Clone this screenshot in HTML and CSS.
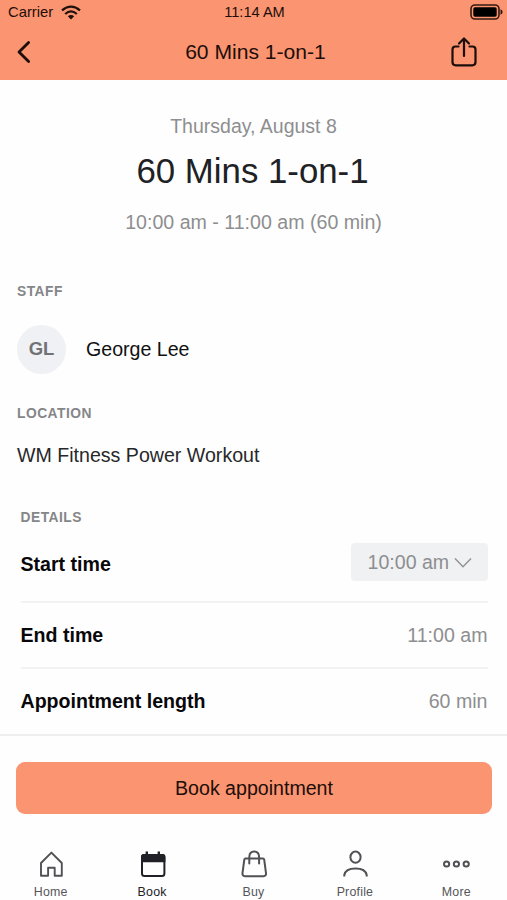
FILE: index.html
```html
<!DOCTYPE html>
<html lang="en">
<head>
<meta charset="utf-8">
<title>60 Mins 1-on-1</title>
<link rel="stylesheet" href="styles.css">
</head>
<body>
<div class="screen">
  <header class="top">
    <div class="status">
      <div class="carrier"><span>Carrier</span>
        <svg class="wifi" viewBox="0 0 20 15" width="20" height="15"><g fill="none" stroke="#20110c" stroke-width="2.3"><path d="M1 5.4Q10-2.2 19 5.4"/><path d="M4.2 9Q10 3.8 15.8 9"/></g><path d="M6.8 11.3Q10 8.6 13.2 11.3L10 14.5Z" fill="#20110c"/></svg>
      </div>
      <span class="clock">11:14 AM</span>
      <svg class="battery" viewBox="0 0 33 16" width="33" height="16"><rect x="1" y="1" width="28" height="14" rx="4" fill="none" stroke="#35180f" stroke-width="1.6"/><rect x="3.3" y="3.3" width="23.4" height="9.4" rx="1.7" fill="#000"/><path d="M30.5 5.3Q32.6 6 32.6 8T30.5 10.7Z" fill="#35180f"/></svg>
    </div>
    <div class="nav">
      <svg class="back" viewBox="0 0 16 24" width="16" height="24"><path d="M12.6 2.5L3 12L12.6 21.5" fill="none" stroke="#1c0e0a" stroke-width="2.8" stroke-linecap="round" stroke-linejoin="round"/></svg>
      <span class="nav-title">60 Mins 1-on-1</span>
      <svg class="share" viewBox="0 0 28 32" width="28" height="32"><g fill="none" stroke="#1c0e0a" stroke-width="2.2" stroke-linecap="round" stroke-linejoin="round"><path d="M8.5 10.5H5.5Q2.5 10.5 2.5 13.5V26Q2.5 29.3 5.8 29.3H22.2Q25.5 29.3 25.5 26V13.5Q25.5 10.5 22.5 10.5H19.5"/><path d="M14 20V3M9 7.5L14 2.5L19 7.5"/></g></svg>
    </div>
  </header>

  <main class="content">
    <section class="summary">
      <div class="date">Thursday, August 8</div>
      <h1>60 Mins 1-on-1</h1>
      <div class="time">10:00 am - 11:00 am (60 min)</div>
    </section>
    <section class="staff">
      <h2>STAFF</h2>
      <div class="person"><div class="avatar">GL</div><span>George Lee</span></div>
    </section>
    <section class="location">
      <h2>LOCATION</h2>
      <div class="place">WM Fitness Power Workout</div>
    </section>
    <section class="details">
      <h2>DETAILS</h2>
      <div class="row start"><b>Start time</b>
        <div class="select"><span>10:00 am</span><svg viewBox="0 0 18 11" width="18" height="11"><path d="M1 1.5L9 9.7L17 1.5" fill="none" stroke="#929395" stroke-width="1.5"/></svg></div>
      </div>
      <div class="row end"><b>End time</b><span>11:00 am</span></div>
      <div class="row length"><b>Appointment length</b><span>60 min</span></div>
    </section>
  </main>

  <footer class="bottom">
    <button class="book" type="button">Book appointment</button>
    <nav class="tabs">
      <div class="tab">
        <svg viewBox="0 0 30 30" width="30" height="30"><path d="M5 25.8V13L15.4 2.6L25.8 13V25.8H18.7V17.7H12.1V25.8Z" fill="none" stroke="#505154" stroke-width="1.9" stroke-linejoin="round"/></svg>
        <span>Home</span>
      </div>
      <div class="tab active">
        <svg viewBox="0 0 30 30" width="30" height="30"><rect x="5" y="5" width="22.4" height="21" rx="2.5" fill="none" stroke="#202126" stroke-width="2"/><path d="M4 12.2V6.5Q4 4 6.5 4H8.6V1.6H11V4H20.6V1.6H23V4H25.9Q28.4 4 28.4 6.5V12.2Z" fill="#202126"/></svg>
        <span>Book</span>
      </div>
      <div class="tab">
        <svg viewBox="0 0 30 30" width="30" height="30"><g fill="none" stroke="#505154" stroke-width="2" stroke-linecap="round" stroke-linejoin="round"><path d="M6.5 8.6H24Q25 8.6 25.2 9.6L27 23.2Q27.3 26.2 24.5 26.2H6Q3.2 26.2 3.5 23.2L5.3 9.6Q5.5 8.6 6.5 8.6Z"/><path d="M10.3 13.5V7Q10.3 1.4 15.2 1.4T20.1 7V13.5"/></g></svg>
        <span>Buy</span>
      </div>
      <div class="tab">
        <svg viewBox="0 0 30 30" width="30" height="30"><g fill="none" stroke="#505154" stroke-width="2"><ellipse cx="15.5" cy="7.2" rx="5.1" ry="5.6"/><path d="M4.3 26.5V25Q5.5 18.5 15.5 18.5T26.7 25V26.5"/></g></svg>
        <span>Profile</span>
      </div>
      <div class="tab">
        <svg viewBox="0 0 30 30" width="30" height="30"><g fill="none" stroke="#505154" stroke-width="2"><circle cx="5.6" cy="14" r="2.6"/><circle cx="15.4" cy="14" r="2.6"/><circle cx="25.2" cy="14" r="2.6"/></g></svg>
        <span>More</span>
      </div>
    </nav>
  </footer>
</div>
</body>
</html>
```
FILE: styles.css
```css
* { box-sizing: border-box; }
body { margin: 0; background: #fff; color: #111; font-family: "Liberation Sans", Arial, sans-serif; font-size: 19.6px; line-height: 24px; }
svg { display: block; flex: none; }
.screen { width: 507px; height: 900px; overflow: hidden; display: flex; flex-direction: column; background: #fefefe; }

.top { height: 80px; background: #fb9470; color: #1c0e0a; }
.status { display: grid; grid-template-columns: 1fr auto 1fr; align-items: center; height: 24px; padding: 0 4px 0 8px; font-size: 14.6px; line-height: 24px; }
.carrier { display: flex; align-items: center; gap: 8px; font-size: 14.8px; }
.clock { padding-right: 2px; }
.battery { justify-self: end; }
.nav { display: grid; grid-template-columns: 1fr auto 1fr; align-items: center; height: 56px; padding: 0 29px 0 16px; }
.nav-title { font-size: 21.1px; padding-left: 17px; }
.share { justify-self: end; }

.content { flex: 1; min-height: 0; }
.summary { padding-top: 34px; text-align: center; color: #8d8e90; }
.date { font-size: 19.5px; line-height: 24px; }
h1 { margin: 9px 2px 15px 0; font-size: 34.8px; line-height: 48px; font-weight: 400; color: #202124; }
h2 { margin: 0; font-size: 13.8px; line-height: 18px; font-weight: 700; letter-spacing: .5px; color: #858688; }
.staff { padding: 49px 17px 0; }
.person { display: flex; align-items: center; gap: 20px; height: 50px; margin-top: 23px; }
.avatar { display: flex; align-items: center; justify-content: center; width: 49px; height: 49px; border-radius: 50%; background: #f0f1f4; color: #717276; font-weight: 700; font-size: 18.5px; }
.location { padding: 31px 17px 0; }
.place { margin-top: 20px; color: #27282a; }
.details { padding: 42px 19.5px 0 20.5px; }
.row { display: flex; align-items: center; justify-content: space-between; border-bottom: 2px solid #f2f2f3; color: #8d8e90; }
.row b { color: #08080a; }
.start { height: 76px; align-items: flex-start; padding-top: 16px; }
.start b { padding-top: 9px; }
.select { display: flex; align-items: center; gap: 5px; width: 137px; height: 38px; padding-left: 17px; border-radius: 4px; background: #f0f1f3; }
.end { height: 66px; }
.length { height: 64px; border-bottom: 0; }

.bottom { height: 166px; border-top: 2px solid #eeeeef; padding: 26px 15px 0 16px; }
.book { display: block; width: 476px; height: 52px; padding: 0; border: 0; border-radius: 9px; background: #fb9470; color: #200d08; font: inherit; }
.tabs { display: flex; margin: 36px -15px 0 -16px; }
.tab { flex: 1; display: flex; flex-direction: column; align-items: center; gap: 4px; color: #55565a; font-size: 12.4px; line-height: 16px; letter-spacing: .2px; }
.active { color: #202126; }
```
